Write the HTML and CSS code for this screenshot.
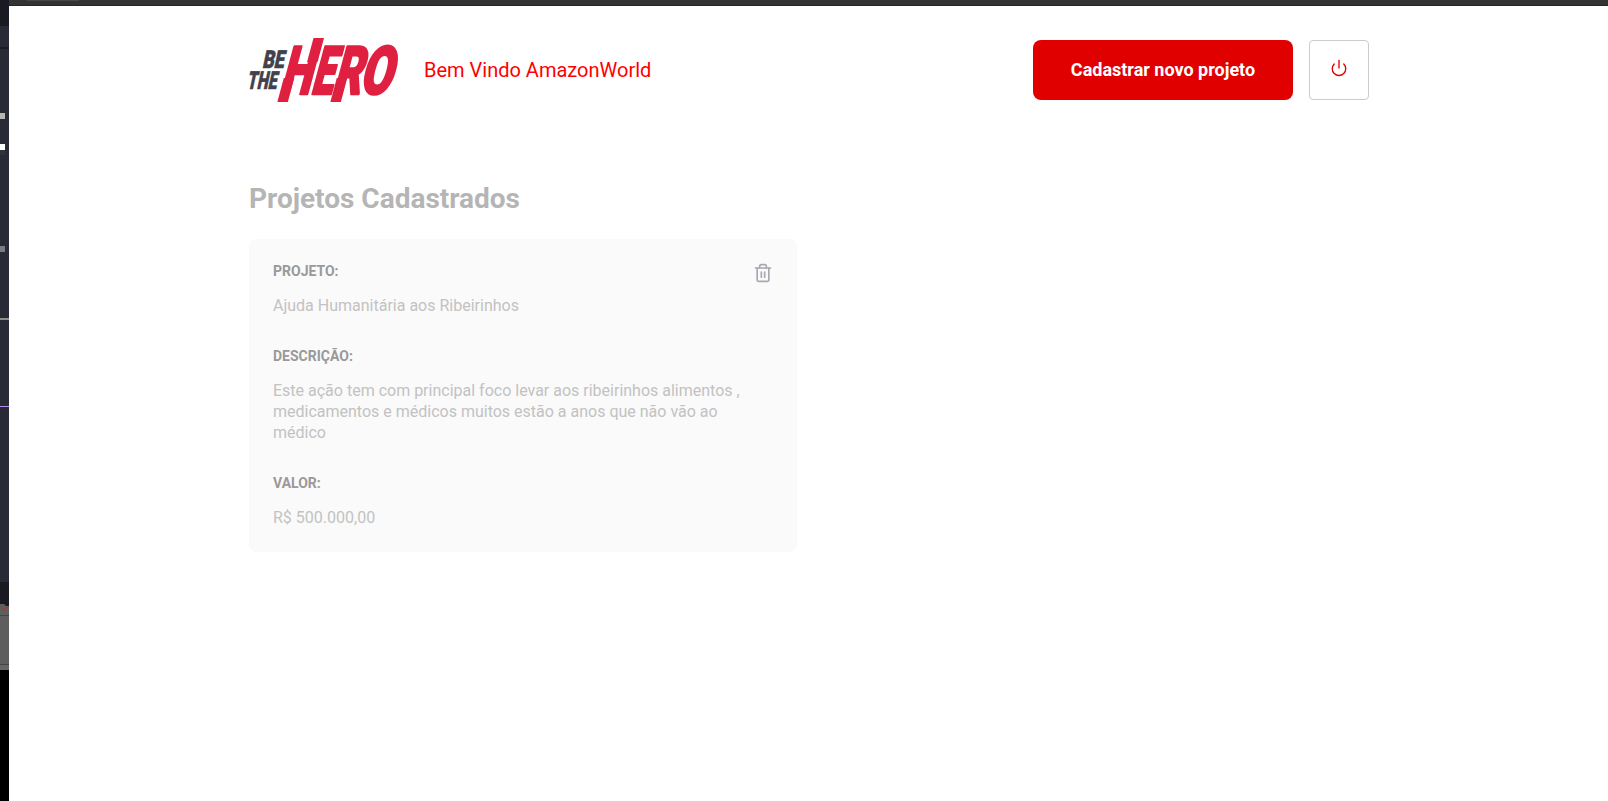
FILE: index.html
```html
<!DOCTYPE html>
<html lang="pt-BR">
<head>
<meta charset="utf-8">
<title>Be The Hero</title>
<link rel="stylesheet" href="styles.css">
</head>
<body>
<div class="screen">
  <aside class="strip">
    <div class="strip-title"></div>
    <div class="strip-tabs"></div>
    <div class="strip-editor">
      <i class="mark mark-gray"></i>
      <i class="mark mark-white"></i>
      <i class="mark mark-shade"></i>
      <i class="mark mark-dim"></i>
      <i class="rule rule-gray"></i>
      <i class="rule rule-purple"></i>
    </div>
    <div class="strip-status"></div>
    <div class="strip-panel">
      <svg class="squiggle" width="9" height="11" viewBox="0 0 9 11"><path d="M4 0h5v2H6z" fill="#1c1c18"/><path d="M0 3 L3 5.500 L6 4 L9 3" fill="none" stroke="#b3322c"/></svg>
    </div>
    <div class="strip-end"></div>
  </aside>
  <div class="window">
    <div class="browser-bar"><div class="browser-tab"></div></div>
    <div class="profile-container">
      <header class="header">
        <svg class="logo" width="151" height="64" viewBox="0 0 151 64" role="img" aria-label="Be The Hero">
          <g class="logo-small" transform="skewX(-12)">
            <text x="19.500" y="30.400" textLength="21.500" lengthAdjust="spacingAndGlyphs">BE</text>
            <text x="8.500" y="51.200" textLength="29.500" lengthAdjust="spacingAndGlyphs">THE</text>
          </g>
          <g class="logo-big" transform="skewX(-15)">
            <rect x="45.500" y="40" width="10.500" height="24"/>
            <rect x="64.500" y="0" width="10.500" height="24"/>
            <rect x="98.500" y="40" width="10.500" height="24"/>
            <text x="45" y="56" textLength="31" lengthAdjust="spacingAndGlyphs">H</text>
            <text x="76" y="56" textLength="22" lengthAdjust="spacingAndGlyphs">E</text>
            <text x="98" y="56" textLength="28" lengthAdjust="spacingAndGlyphs">R</text>
            <text x="124.500" y="56" textLength="32" lengthAdjust="spacingAndGlyphs">O</text>
          </g>
        </svg>
        <span class="welcome">Bem Vindo AmazonWorld</span>
        <a class="button">Cadastrar novo projeto</a>
        <button class="logout" type="button" aria-label="Sair">
          <svg width="18" height="18" viewBox="0 0 24 24" fill="none" stroke="#e10000" stroke-width="1.800" stroke-linecap="round" stroke-linejoin="round"><path d="M18.360 6.640a9 9 0 1 1-12.730 0"/><path d="M12 2v10"/></svg>
        </button>
      </header>
      <h1>Projetos Cadastrados</h1>
      <ul class="projects">
        <li class="project">
          <div class="details">
            <strong>PROJETO:</strong>
            <p>Ajuda Humanitária aos Ribeirinhos</p>
            <strong>DESCRIÇÃO:</strong>
            <p>Este ação tem com principal foco levar aos ribeirinhos alimentos , medicamentos e médicos muitos estão a anos que não vão ao médico</p>
            <strong>VALOR:</strong>
            <p>R$ 500.000,00</p>
          </div>
          <button class="remove" type="button" aria-label="Excluir">
            <svg width="20" height="20" viewBox="0 0 24 24" fill="none" stroke="#a8a8b3" stroke-width="2" stroke-linecap="round" stroke-linejoin="round"><path d="M3 6h18"/><path d="M19 6v14a2 2 0 0 1-2 2H7a2 2 0 0 1-2-2V6m3 0V4a2 2 0 0 1 2-2h4a2 2 0 0 1 2 2v2"/><path d="M10 11v6M14 11v6"/></svg>
          </button>
        </li>
      </ul>
    </div>
  </div>
</div>
</body>
</html>
```

FILE: styles.css
```css
* { margin: 0; padding: 0; box-sizing: border-box; }
body { font: 400 14px Roboto, sans-serif; background: #fff; }
.screen { display: flex; height: 801px; overflow: hidden; }

.strip { width: 9px; flex: none; display: flex; flex-direction: column; background: #000; }
.strip-title { height: 26px; background: #1a1a22; }
.strip-tabs { height: 23px; background: #282a36; border-bottom: 2px solid #1c1d27; }
.strip-editor { height: 533px; background: #282a36; position: relative; }
.strip-status { height: 22px; background: #1a1a22; }
.strip-panel { height: 66px; background: #5e5e5e; border-bottom: 5px solid #666; box-shadow: inset 0 -1px #444; }
.squiggle { display: block; height: 12px; border-bottom: 1px solid #444; }
.strip-end { flex: 1; background: #000; }
.mark { position: absolute; left: 0; width: 5px; height: 6px; }
.mark-gray { top: 64px; background: #b9b7b5; }
.mark-white { top: 95px; background: #fff; }
.mark-shade { top: 101px; height: 5px; background: #2e323a; }
.mark-dim { top: 197px; background: #7b7b86; }
.rule { position: absolute; left: 0; width: 9px; }
.rule-gray { top: 269px; height: 2px; background: #8f8f8c; }
.rule-purple { top: 357px; height: 1px; background: #b58cf2; }

.window { flex: 1; min-width: 0; padding-left: 1px; }
.browser-bar { height: 6px; margin-left: -1px; background: #333; border-bottom: 1px solid #2a2323; padding-left: 18px; }
.browser-tab { width: 52px; height: 1px; background: #484848; }

.profile-container { width: 1120px; margin: 32px auto 0; }
.header { display: flex; align-items: center; height: 64px; }
.logo { flex: none; overflow: visible; }
.logo-small { fill: #41414d; stroke: #41414d; stroke-width: .7; font: 900 24.5px Roboto, sans-serif; }
.logo-big { fill: #e02041; font: 900 67px Roboto, sans-serif; }
.logo-big text { stroke: #e02041; stroke-width: 2.4; stroke-linejoin: round; }
.welcome { font-size: 20px; color: #f00; margin-left: 24px; }
.button {
  width: 260px; height: 60px; margin-left: auto;
  background: #e10000; border-radius: 8px; color: #fff;
  font-size: 18px; font-weight: 700; line-height: 60px; text-align: center;
}
.logout {
  width: 60px; height: 60px; margin-left: 16px; padding-bottom: 4px;
  display: flex; align-items: center; justify-content: center;
  border: 1px solid #ccc; border-radius: 4px; background: transparent;
}
h1 { margin-top: 80px; margin-bottom: 24px; font-size: 28px; line-height: 33px; color: #b5b5b5; }
.projects { display: grid; grid-template-columns: repeat(2, 1fr); gap: 24px; list-style: none; }
.project { display: flex; padding: 24px; border-radius: 8px; background: #fafafa; }
.details { width: 476px; }
.details strong { display: block; margin-bottom: 16px; line-height: 16px; color: #999; }
.details p { font-size: 16px; line-height: 21px; color: #c2c2c2; }
.details p + strong { margin-top: 32px; }
.remove { margin-left: auto; align-self: flex-start; border: 0; background: transparent; }
.remove svg { display: block; }
```
